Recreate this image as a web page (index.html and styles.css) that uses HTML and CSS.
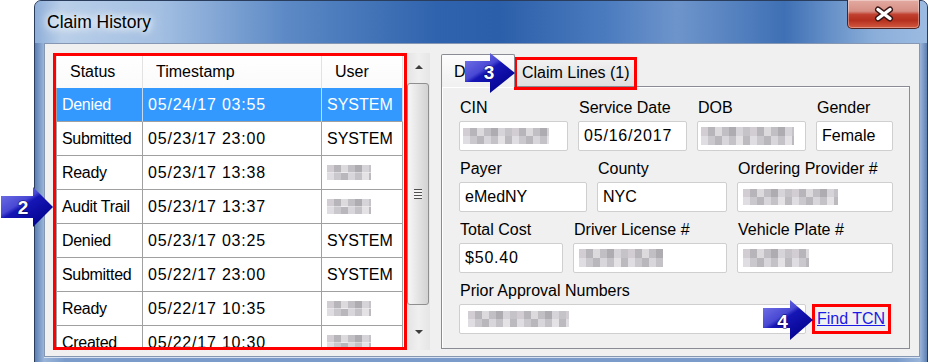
FILE: index.html
```html
<!DOCTYPE html>
<html lang="en">
<head>
    <meta charset="UTF-8">
    <meta name="viewport" content="width=device-width, initial-scale=1.0">
    <title>Claim History</title>
    <link rel="stylesheet" href="styles.css">
</head>
<body>
    <div class="window">
        <div class="titlebar">
            <span class="title">Claim History</span>
            <button class="close" aria-label="Close">
                <svg width="20" height="16" viewBox="0 0 20 16">
                    <path d="M4 3.5L16 12.5M16 3.5L4 12.5" stroke="#3a1614" stroke-width="6" stroke-linecap="round"/>
                    <path d="M4 3.5L16 12.5M16 3.5L4 12.5" stroke="#fff" stroke-width="3.4" stroke-linecap="round"/>
                </svg>
            </button>
        </div>
        <div class="client">
            <div class="list">
                <div class="row head">
                    <div class="cell">Status</div>
                    <div class="cell">Timestamp</div>
                    <div class="cell">User</div>
                </div>
                <div class="row selected">
                    <div class="cell status">Denied</div>
                    <div class="cell num">05/24/17 03:55</div>
                    <div class="cell">SYSTEM</div>
                </div>
                <div class="row">
                    <div class="cell status">Submitted</div>
                    <div class="cell num">05/23/17 23:00</div>
                    <div class="cell">SYSTEM</div>
                </div>
                <div class="row">
                    <div class="cell status">Ready</div>
                    <div class="cell num">05/23/17 13:38</div>
                    <div class="cell"><span class="blur blur-user"></span></div>
                </div>
                <div class="row">
                    <div class="cell status">Audit Trail</div>
                    <div class="cell num">05/23/17 13:37</div>
                    <div class="cell"><span class="blur blur-user"></span></div>
                </div>
                <div class="row">
                    <div class="cell status">Denied</div>
                    <div class="cell num">05/23/17 03:25</div>
                    <div class="cell">SYSTEM</div>
                </div>
                <div class="row">
                    <div class="cell status">Submitted</div>
                    <div class="cell num">05/22/17 23:00</div>
                    <div class="cell">SYSTEM</div>
                </div>
                <div class="row">
                    <div class="cell status">Ready</div>
                    <div class="cell num">05/22/17 10:35</div>
                    <div class="cell"><span class="blur blur-user"></span></div>
                </div>
                <div class="row">
                    <div class="cell status">Created</div>
                    <div class="cell num">05/22/17 10:30</div>
                    <div class="cell"><span class="blur blur-user"></span></div>
                </div>
            </div>
            <div class="scrollbar">
                <div class="sb-btn up"></div>
                <div class="sb-thumb"><span class="grip"></span></div>
                <div class="sb-btn down"></div>
            </div>
            <div class="tabs">
                <div class="tab-strip">
                    <!-- only the first letter shows; callout 3 covers the rest -->
                    <div class="tab active" aria-label="Details">D</div>
                    <div class="tab lines">Claim Lines (1)</div>
                </div>
                <div class="tab-page">
                    <div class="form-row">
                        <div class="field f-cin"><label>CIN</label><div class="box"><span class="blur blur-cin"></span></div></div>
                        <div class="field f-date"><label>Service Date</label><div class="box num">05/16/2017</div></div>
                        <div class="field f-dob"><label>DOB</label><div class="box"><span class="blur blur-dob"></span></div></div>
                        <div class="field f-gender"><label>Gender</label><div class="box">Female</div></div>
                    </div>
                    <div class="form-row">
                        <div class="field f-payer"><label>Payer</label><div class="box">eMedNY</div></div>
                        <div class="field f-county"><label>County</label><div class="box">NYC</div></div>
                        <div class="field f-wide"><label>Ordering Provider #</label><div class="box"><span class="blur blur-prov"></span></div></div>
                    </div>
                    <div class="form-row">
                        <div class="field f-cost"><label>Total Cost</label><div class="box num">$50.40</div></div>
                        <div class="field f-license"><label>Driver License #</label><div class="box"><span class="blur blur-lic"></span></div></div>
                        <div class="field f-wide"><label>Vehicle Plate #</label><div class="box"><span class="blur blur-plate"></span></div></div>
                    </div>
                    <div class="form-row last">
                        <div class="field f-prior"><label>Prior Approval Numbers</label><div class="box"><span class="blur blur-prior"></span></div></div>
                        <a class="find" href="#">Find TCN</a>
                    </div>
                </div>
            </div>
        </div>
    </div>

    <svg class="defs" width="0" height="0">
        <defs>
            <linearGradient id="arrow-fill" x1="0" y1="0" x2="0.8" y2="1">
                <stop offset="0" stop-color="#7c7cea"/>
                <stop offset="0.42" stop-color="#4848d4"/>
                <stop offset="0.5" stop-color="#1616b6"/>
                <stop offset="1" stop-color="#00008a"/>
            </linearGradient>
        </defs>
    </svg>

    <svg class="callout c2" width="52" height="40" viewBox="0 0 52 40">
        <path d="M0 9H32V0L52 20L32 40V31H0Z" fill="url(#arrow-fill)"/>
        <text x="22" y="26.5">2</text>
    </svg>
    <svg class="callout c3" width="50" height="40" viewBox="0 0 50 40">
        <path d="M0 8H25V0L50 20L25 40V29H0Z" fill="url(#arrow-fill)"/>
        <text x="24" y="25.5">3</text>
    </svg>
    <svg class="callout c4" width="50" height="40" viewBox="0 0 50 40">
        <path d="M0 8H27V0L50 20L27 40V28H0Z" fill="url(#arrow-fill)"/>
        <text x="19.5" y="28">4</text>
    </svg>
</body>
</html>
```

FILE: styles.css
```css
* {
    box-sizing: border-box;
}
body {
    margin: 0;
    width: 928px;
    height: 362px;
    overflow: hidden;
    position: relative;
    background: #fff;
    font-family: "Liberation Sans", Arial, sans-serif;
    font-size: 16px;
    color: #000;
}

/* window frame */
.window {
    margin-left: 34px;
    width: 894px;
    height: 372px;
    border: 1px solid #2b3d5c;
    border-radius: 7px 7px 0 0;
    background: linear-gradient(90deg, #5d80b3 0, #9ab5d9 9px, #7b9ccb 30px, #7b9ccb calc(100% - 30px), #9ab5d9 calc(100% - 7px), #5d80b3 100%);
}
.titlebar {
    height: 42px;
    display: flex;
    justify-content: space-between;
    align-items: flex-start;
    padding-left: 12px;
    border-radius: 6px 6px 0 0;
    background: linear-gradient(90deg, #8eaed8 0, #b9cfe9 3%, #a3bfe2 14%, #5d8ac6 28%, #2f63ad 45%, #2b5fa9 52%, #4b7bbf 64%, #6e95cb 72%, #3f70b5 84%, #8aaed9 94%, #9cbbe2 100%);
}
.title {
    font-size: 17.5px;
    margin-top: 11px;
    text-shadow: 0 0 6px #fff, 0 0 10px #eef4fb, 0 0 14px #eef4fb;
}
.close {
    width: 73px;
    height: 29px;
    margin: -1px 7px 0 0;
    padding: 0;
    border: 1px solid #4c2320;
    border-top: none;
    border-radius: 0 0 5px 5px;
    background: linear-gradient(#e3aaa2 0, #d68f84 40%, #c0402f 52%, #b52f1e 72%, #d35a40 100%);
    box-shadow: inset 0 0 0 1px rgba(255, 255, 255, 0.35);
    display: flex;
    align-items: center;
    justify-content: center;
}
.client {
    margin: 0 7px 0 9px;
    height: 314px;
    background: #f0f0f0;
    border: 1px solid #8597b2;
    box-shadow: 0 1px 0 #d6e2f1;
    display: flex;
    align-items: flex-start;
    padding: 9px 0 0 8px;
}

/* history list */
.list {
    position: relative;
    width: 354px;
    height: 297px;
    background: #fff;
    overflow: hidden;
    padding: 3px 0 0 3px;
}
.list::after {
    content: "";
    position: absolute;
    inset: 0;
    border: 3px solid #f00;
}
.row {
    display: grid;
    grid-template-columns: 87px 179px 81px;
}
.cell {
    height: 34px;
    padding: 0 5px;
    border-right: 1px solid #a0a0a0;
    border-bottom: 1px solid #a0a0a0;
    display: flex;
    align-items: center;
    white-space: nowrap;
    overflow: hidden;
}
.cell:first-child {
    border-left: 1px solid #a0a0a0;
}
.row.head .cell {
    height: 32px;
    padding-left: 13px;
    border-color: #e2e2e2;
    border-bottom: none;
    background: linear-gradient(#fff, #fafafa);
}
.row.selected .cell {
    background: #3399ff;
    color: #fff;
    border-right-color: #c9d9ee;
}
.status {
    letter-spacing: -0.3px;
}
.num {
    letter-spacing: 0.8px;
}

/* scrollbar */
.scrollbar {
    width: 23px;
    height: 297px;
    background: linear-gradient(90deg, #e4e4e4, #efefef 50%, #e6e6e6);
    display: flex;
    flex-direction: column;
}
.sb-btn {
    height: 28px;
    display: flex;
    align-items: center;
    justify-content: center;
}
.sb-btn::before {
    content: "";
    border-left: 4px solid transparent;
    border-right: 4px solid transparent;
}
.sb-btn.up::before {
    border-bottom: 4px solid #3d3d3d;
}
.sb-btn.down {
    margin-top: auto;
    margin-bottom: 4px;
}
.sb-btn.down::before {
    border-top: 4px solid #3d3d3d;
}
.sb-thumb {
    margin-top: 2px;
    width: 22px;
    height: 222px;
    border: 1px solid #8f8f8f;
    border-radius: 3px;
    background: linear-gradient(90deg, #f6f6f6, #e6e6e6 45%, #d2d2d2);
    display: flex;
    align-items: center;
    justify-content: center;
}
.grip {
    width: 8px;
    height: 10px;
    background: repeating-linear-gradient(#505050 0 1px, #f4f4f4 1px 3px);
}

/* tabs */
.tabs {
    margin: 1px 0 0 11px;
    width: 469px;
}
.tab-strip {
    display: flex;
    height: 32px;
    align-items: flex-end;
}
.tab {
    height: 29px;
    width: 121px;
    padding: 2px 0 0 6px;
    border: 1px solid #898c95;
    border-bottom: none;
    border-radius: 2px 2px 0 0;
    background: linear-gradient(#f3f3f3, #dfdfdf);
    display: flex;
    align-items: center;
    white-space: nowrap;
}
.tab.active {
    position: relative;
    z-index: 1;
    height: 33px;
    width: 74px;
    margin-bottom: -1px;
    padding: 2px 0 0 12px;
    background: linear-gradient(#fcfcfc, #f0f0f0);
}
.tab.lines {
    position: relative;
}
.tab.lines::after {
    content: "";
    position: absolute;
    top: -1px;
    left: -2px;
    right: -2px;
    bottom: -4px;
    border: 3px solid #f00;
}
.tab-page {
    height: 263px;
    border: 1px solid #898c95;
    background: #f0f0f0;
    box-shadow: inset 1px 1px 0 #fff;
    padding: 12px 0 0 17px;
    display: flex;
    flex-direction: column;
    gap: 9px;
}
.form-row {
    display: flex;
    gap: 10px;
    align-items: flex-end;
}
.form-row.last {
    gap: 6px;
}
.field {
    display: flex;
    flex-direction: column;
    gap: 4px;
}
.field label {
    line-height: 18px;
    padding-left: 1px;
    white-space: nowrap;
}
.box {
    height: 30px;
    padding: 0 5px;
    border: 1px solid #cfcfcf;
    border-radius: 2px;
    background: #fff;
    display: flex;
    align-items: center;
    white-space: nowrap;
}
.f-cin, .f-date, .f-dob { width: 109px; }
.f-gender { width: 77px; }
.f-payer { width: 128px; }
.f-county { width: 130px; }
.f-wide { width: 156px; }
.f-cost { width: 104px; }
.f-license { width: 154px; }
.f-prior { width: 347px; }
.find {
    position: relative;
    width: 79px;
    height: 30px;
    padding-left: 5px;
    display: flex;
    align-items: center;
    color: #1a1ae6;
    text-decoration: underline;
}
.find::after {
    content: "";
    position: absolute;
    inset: 0;
    border: 3px solid #f00;
}

/* pixelated personal data */
.blur {
    display: inline-block;
    height: 16px;
    background:
        repeating-linear-gradient(90deg, #c9c5cb 0 7px, #aca9af 7px 14px, #d6d4d8 14px 21px, #b7b4ba 21px 28px, #a09da4 28px 35px, #cfcdd2 35px 42px, #bcb9bf 42px 49px) top / 100% 50% no-repeat,
        repeating-linear-gradient(90deg, #dad8dc 0 7px, #c2bfc5 7px 14px, #aeabb1 14px 21px, #d2d0d4 21px 28px, #bbb8be 28px 35px, #e0dee1 35px 42px, #b2afb5 42px 49px) bottom / 100% 50% no-repeat;
    filter: blur(0.7px);
    opacity: 0.85;
}
.blur-user { width: 44px; height: 15px; }
.blur-cin { width: 86px; margin-left: -2px; }
.blur-dob { width: 93px; height: 18px; margin-left: -2px; }
.blur-prov { width: 95px; }
.blur-lic { width: 84px; height: 18px; }
.blur-plate { width: 66px; height: 18px; }
.blur-prior { width: 101px; margin-left: 3px; }

/* numbered callouts */
.defs {
    position: absolute;
}
.callout {
    position: absolute;
    z-index: 5;
}
.callout text {
    font-family: "Liberation Sans", Arial, sans-serif;
    font-weight: bold;
    font-size: 19px;
    fill: #fff;
    stroke: #0a0a5a;
    stroke-width: 1px;
    paint-order: stroke;
    text-anchor: middle;
}
.c2 { left: 1px; top: 187px; }
.c3 { left: 465px; top: 53px; }
.c4 { left: 763px; top: 300px; }
```
